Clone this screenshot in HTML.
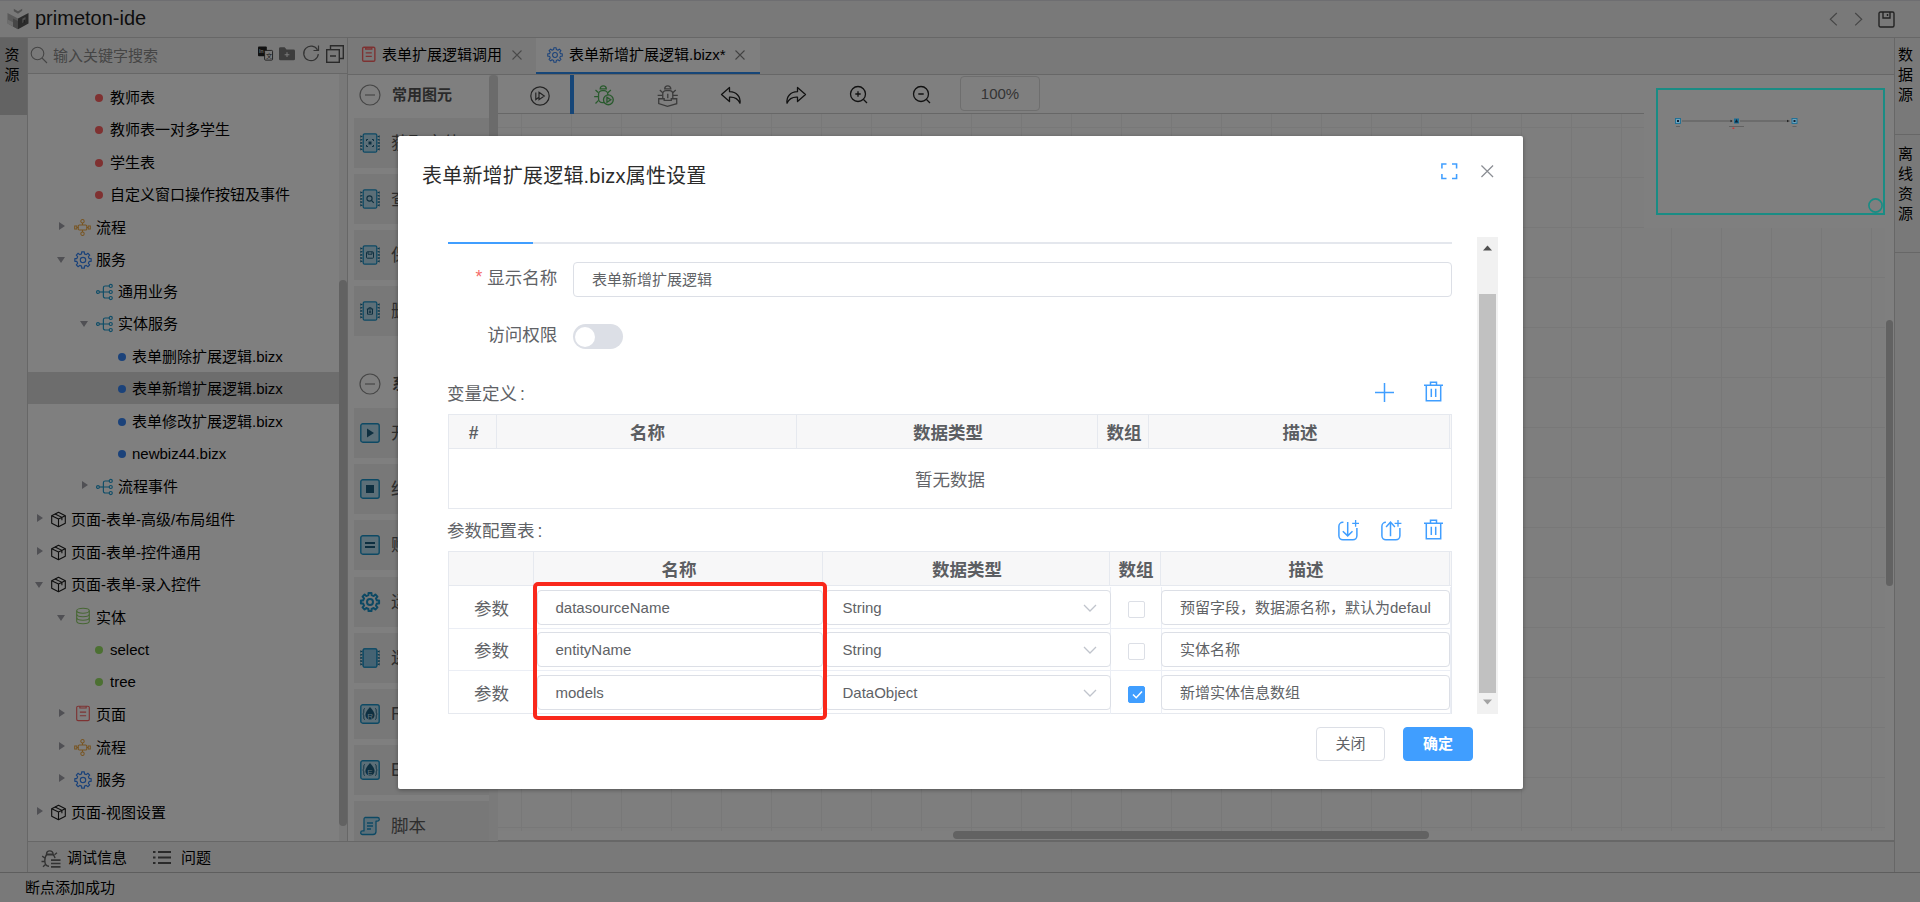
<!DOCTYPE html>
<html lang="zh-CN">
<head>
<meta charset="utf-8">
<title>primeton-ide</title>
<style>
*{box-sizing:border-box;margin:0;padding:0}
html,body{width:1920px;height:902px;overflow:hidden;background:#fff}
body{position:relative;font-family:"Liberation Sans","Noto Sans CJK SC",sans-serif;font-size:15px;color:#000}
.abs{position:absolute}
svg{position:absolute;overflow:visible}
/* ---------- underlying app ---------- */
#app{position:absolute;left:0;top:0;width:1920px;height:902px;background:#fff;z-index:0;overflow:hidden}
#hdr{left:0;top:0;width:1920px;height:38px;background:#f3f3f3;border-bottom:1px solid #cfcfcf;border-top:1px solid #dcdce2}
#hdr .ttl{left:35px;top:4px;font-size:20px;line-height:26px;color:#1a1a1a}
#lstrip{left:0;top:38px;width:28px;height:835px;background:#f3f3f3;border-right:1px solid #cfcfcf}
#lstrip .tab{left:0;top:0;width:27px;height:77px;background:#c6c6c6}
.vtxt{font-size:15px;line-height:20px;width:15px;text-align:center;color:#000}
#rstrip{left:1894px;top:38px;width:26px;height:835px;background:#f3f3f3;border-left:1px solid #cfcfcf}
#rstrip .sep{left:0;width:26px;height:1px;background:#cfcfcf}
#tree{left:28px;top:38px;width:320px;height:803px;background:#fff;border-right:1px solid #cfcfcf}
#tsearch{left:0;top:0;width:319px;height:36px;background:#f3f3f3;border-bottom:1px solid #cfcfcf}
#tsearch .ph{left:25px;top:7px;font-size:15px;line-height:22px;color:#8a8a8a}
.ti{position:absolute;left:0;width:311px;height:32px;line-height:32px;font-size:15px;color:#000;white-space:nowrap}
.ti.sel{background:#dadada}
.ti span{position:absolute;top:1px}
.dot{position:absolute;width:8px;height:8px;border-radius:50%;top:13px}
.arr{position:absolute;width:0;height:0}
.arr.r{border-left:6px solid #a0a0a8;border-top:4.5px solid transparent;border-bottom:4.5px solid transparent;top:11px}
.arr.d{border-top:6px solid #a0a0a8;border-left:4.5px solid transparent;border-right:4.5px solid transparent;top:14px}
#tscroll{left:310.500px;top:36px;width:8.500px;height:767px;background:#f3f3f3}
#tscroll i{position:absolute;left:0.500px;top:206px;width:8px;height:546px;background:#c4c4c4;border-radius:4px}
#tabs{z-index:2;left:348px;top:38px;width:1546px;height:37px;background:#f3f3f3;border-bottom:1px solid #cfcfcf}
#tabs .t{position:absolute;top:0;height:36px;line-height:34px;font-size:15px;color:#000;white-space:nowrap}
#tabs .act{border-bottom:2px solid #2d8cf0;background:#fff}
#pal{left:348px;top:74px;width:150px;height:767px;background:#fff;overflow:hidden}
.pi{position:absolute;left:6px;width:135px;height:50px;background:#f0f0f0;font-size:17.5px;line-height:50px;color:#5c5c5c}
.pi span{position:absolute;left:37px;top:0}
.ph2{position:absolute;left:44px;font-size:15px;font-weight:bold;color:#555;line-height:20px}
#pscroll{left:141px;top:1px;width:8.500px;height:767px;background:#f4f4f4}
#pscroll i{position:absolute;left:0;top:0;width:8.500px;height:500px;background:#d6d6d6;border-radius:4px}
#tbar{left:498px;top:75px;width:1146px;height:39px;background:#fff;border-bottom:1px solid #cfcfcf}
#canvas{left:498px;top:114px;width:1396px;height:727px;background-color:#fdfdfd;
 background-image:linear-gradient(to right,#f1f1f1 1px,transparent 1px),linear-gradient(to bottom,#f1f1f1 1px,transparent 1px);
 background-size:50px 50px;background-position:23px 13px;border-bottom:1px solid #cfcfcf}
#bbar{left:28px;top:841px;width:1866px;height:32px;background:#f3f3f3;border-top:1px solid #cfcfcf;font-size:15px}
#sbar{left:0;top:872px;width:1920px;height:30px;background:#f3f3f3;border-top:1px solid #bdbdbd;font-size:15px}
#mask{left:0;top:0;width:1920px;height:902px;background:rgba(0,0,0,.5)}
/* ---------- dialog ---------- */
#dlg{left:398px;top:136px;width:1125px;height:653px;background:#fff;border-radius:2px;box-shadow:0 1px 4px rgba(0,0,0,.35);color:#606266}
#dlg .title{left:24px;top:27px;font-size:20px;line-height:26px;color:#2b2b2b;white-space:nowrap;letter-spacing:0.200px}
.lab{position:absolute;font-size:17.5px;line-height:24px;color:#606266;white-space:nowrap}
.inp{position:absolute;height:35px;border:1px solid #dcdfe6;border-radius:4px;background:#fff;font-size:15px;line-height:33px;color:#606266;padding-left:18px;white-space:nowrap;overflow:hidden}
.th{position:absolute;top:0;height:34px;line-height:36px;padding-left:2px;text-align:center;font-weight:bold;font-size:17.5px;color:#5c5e62;border-right:1px solid #e6e9ef}
.tbl{position:absolute;border:1px solid #e6e9ef;background:#fff}
.thead{position:absolute;left:0;top:0;height:34px;background:#f7f7f8;border-bottom:1px solid #e6e9ef}
.cb{position:absolute;width:17px;height:17px;border:1px solid #dcdfe6;border-radius:2px;background:#fff}
.cb.on{background:#409eff;border-color:#409eff}
.btn{position:absolute;height:34px;border-radius:4px;font-size:15px;line-height:32px;text-align:center}
</style>
</head>
<body>
<div id="app">
<div id="hdr" class="abs"><svg style="left:6.5px;top:6.5px" width="22" height="22" viewBox="0 0 22 22" ><path d="M6.800 0.800L11 3.300l4.200 -2.500v2L11 5.800 6.800 3.300z" fill="#a4a4a4"/><path d="M0.500 5L11 10.500v10.700L0.500 15.500z" fill="#b4b4b4"/><path d="M0.500 11.500l5.500 2.800v4L0.500 15.500z" fill="#dadada"/><path d="M6 10.500l5 2.500v8.200l-5 -2.700z" fill="#8e8e8e"/><path d="M21.500 5L11 10.500v10.700l10.500 -5.700z" fill="#565656"/><path d="M15.300 10.800l3.200 -1.700v4.300l-3.200 1.700z" fill="#a0a0a0"/><path d="M16.500 12.200l2 -1v3l-2 1z" fill="#444"/></svg><div class="abs ttl">primeton-ide</div><svg style="left:1827px;top:10px" width="14" height="16" viewBox="0 0 14 16" ><path d="M9.800 2L3.300 8.200l6.500 6.200" fill="none" stroke="#8c8c8c" stroke-width="1.200"/></svg><svg style="left:1851px;top:10px" width="14" height="16" viewBox="0 0 14 16" ><path d="M4.200 2l6.500 6.200-6.500 6.200" fill="none" stroke="#8c8c8c" stroke-width="1.200"/></svg><svg style="left:1878px;top:9.5px" width="17" height="17" viewBox="0 0 17 17" ><g fill="none" stroke="#444" stroke-width="1.4"><rect x="1" y="1" width="15" height="15" rx="1.5"/><path d="M5 1v6h7V1M9.5 3v2"/></g></svg></div>
<div id="lstrip" class="abs"><div class="abs tab"></div><div class="abs vtxt" style="left:4.500px;top:7px">资源</div></div>
<div id="rstrip" class="abs"><div class="abs vtxt" style="left:3px;top:7px">数据源</div><div class="abs sep" style="top:96px"></div><div class="abs vtxt" style="left:3px;top:106px">离线资源</div><div class="abs sep" style="top:214px"></div></div>
<div id="tree" class="abs"><div id="tsearch" class="abs"><svg style="left:1.5px;top:7.5px" width="18" height="18" viewBox="0 0 18 18" ><circle cx="7.500" cy="7.500" r="6.300" fill="none" stroke="#8a8a8a" stroke-width="1.100"/><path d="M12 12l5 5" stroke="#8a8a8a" stroke-width="1.100"/></svg><div class="abs ph">输入关键字搜索</div><svg style="left:229.5px;top:7.5px" width="15" height="15" viewBox="0 0 17 16" ><rect x="0" y="0" width="10" height="11" rx="1" fill="#222"/><rect x="7.5" y="4.5" width="9" height="11" rx="1" fill="#f3f3f3" stroke="#333" stroke-width="1"/><text x="1.2" y="8" font-size="6" fill="#fff" font-family="Liberation Sans,sans-serif">In</text><text x="9" y="13.5" font-size="7" fill="#333" font-family="Liberation Sans,Noto Sans CJK SC,sans-serif">文</text></svg><svg style="left:250.5px;top:8.5px" width="16" height="13.5" viewBox="0 0 17 14" ><path d="M0 1.5A1.5 1.5 0 0 1 1.5 0H6l2 2.5h7.5A1.5 1.5 0 0 1 17 4v8.5a1.500 1.500 0 0 1-1.500 1.500h-14A1.500 1.500 0 0 1 0 12.500z" fill="#7a7a7a"/><path d="M8.500 5.500v5M6 8h5" stroke="#f3f3f3" stroke-width="1.1"/></svg><svg style="left:274px;top:7px" width="18" height="18" viewBox="0 0 18 18" ><path d="M15.500 5A7.300 7.300 0 1 0 16.300 9" fill="none" stroke="#666" stroke-width="1.2"/><path d="M16.500 0.500V5.500H11.500" fill="none" stroke="#666" stroke-width="1.2"/></svg><svg style="left:298px;top:7px" width="18" height="18" viewBox="0 0 18 18" ><g fill="none" stroke="#555" stroke-width="1.4"><rect x="0.700" y="4.700" width="12.600" height="12.600"/><path d="M4.500 4.500V0.700H17.300V13.500H13.500M4 11h6"/></g></svg></div><div class="ti" style="top:43px"><i class="dot" style="left:67px;background:#ff6262"></i><span style="left:82px">教师表</span></div><div class="ti" style="top:75px"><i class="dot" style="left:67px;background:#ff6262"></i><span style="left:82px">教师表一对多学生</span></div><div class="ti" style="top:108px"><i class="dot" style="left:67px;background:#ff6262"></i><span style="left:82px">学生表</span></div><div class="ti" style="top:140px"><i class="dot" style="left:67px;background:#ff6262"></i><span style="left:82px">自定义窗口操作按钮及事件</span></div><div class="ti" style="top:173px"><i class="arr r" style="left:31px"></i><svg style="left:45.5px;top:7.5px" width="17" height="17" viewBox="0 0 20 20" ><g fill="none" stroke="#f0a840" stroke-width="1.2"><circle cx="10" cy="2.6" r="2"/><circle cx="10" cy="17.4" r="2"/><rect x="5" y="7" width="10" height="6" rx="1.2"/><path d="M10 4.6v2.4M10 13v2.400M5 10H3.300M15 10h1.700"/><rect x="0.800" y="8.200" width="2.500" height="3.600"/><rect x="16.700" y="8.200" width="2.500" height="3.600"/></g></svg><span style="left:68px">流程</span></div><div class="ti" style="top:205px"><i class="arr d" style="left:29px"></i><svg style="left:46px;top:7.5px" width="18" height="18" viewBox="0 0 20 20" ><path d="M19.08,8.53 L19.08,11.47 L16.82,11.60 L15.95,13.69 L17.46,15.39 L15.39,17.46 L13.69,15.95 L11.60,16.82 L11.47,19.08 L8.53,19.08 L8.40,16.82 L6.31,15.95 L4.61,17.46 L2.54,15.39 L4.05,13.69 L3.18,11.60 L0.92,11.47 L0.92,8.53 L3.18,8.40 L4.05,6.31 L2.54,4.61 L4.61,2.54 L6.31,4.05 L8.40,3.18 L8.53,0.92 L11.47,0.92 L11.60,3.18 L13.69,4.05 L15.39,2.54 L17.46,4.61 L15.95,6.31 L16.82,8.40Z" fill="none" stroke="#3685f5" stroke-width="1.3" stroke-linejoin="round"/><circle cx="10" cy="10" r="3" fill="none" stroke="#3685f5" stroke-width="1.3"/></svg><span style="left:68px">服务</span></div><div class="ti" style="top:237px"><svg style="left:68px;top:7.5px" width="18" height="18" viewBox="0 0 20 20" ><g fill="none" stroke="#1f9bd0" stroke-width="1.3"><circle cx="2.2" cy="10" r="1.6"/><path d="M3.8 10H8"/><path d="M14.5 3.3H10.2a2 2 0 0 0-2 2v9.4a2 2 0 0 0 2 2h4.3M8.2 10h6.3"/><circle cx="16.4" cy="3.3" r="1.7"/><circle cx="16.4" cy="10" r="1.7"/><circle cx="16.4" cy="16.7" r="1.7"/></g></svg><span style="left:90px">通用业务</span></div><div class="ti" style="top:269px"><i class="arr d" style="left:52px"></i><svg style="left:68px;top:7.5px" width="18" height="18" viewBox="0 0 20 20" ><g fill="none" stroke="#1f9bd0" stroke-width="1.3"><circle cx="2.2" cy="10" r="1.6"/><path d="M3.8 10H8"/><path d="M14.5 3.3H10.2a2 2 0 0 0-2 2v9.4a2 2 0 0 0 2 2h4.3M8.2 10h6.3"/><circle cx="16.4" cy="3.3" r="1.7"/><circle cx="16.4" cy="10" r="1.7"/><circle cx="16.4" cy="16.7" r="1.7"/></g></svg><span style="left:90px">实体服务</span></div><div class="ti" style="top:302px"><i class="dot" style="left:89.5px;background:#3685f5"></i><span style="left:104px">表单删除扩展逻辑.bizx</span></div><div class="ti sel" style="top:334px"><i class="dot" style="left:89.5px;background:#3685f5"></i><span style="left:104px">表单新增扩展逻辑.bizx</span></div><div class="ti" style="top:367px"><i class="dot" style="left:89.5px;background:#3685f5"></i><span style="left:104px">表单修改扩展逻辑.bizx</span></div><div class="ti" style="top:399px"><i class="dot" style="left:89.5px;background:#3685f5"></i><span style="left:104px">newbiz44.bizx</span></div><div class="ti" style="top:432px"><i class="arr r" style="left:54px"></i><svg style="left:68px;top:7.5px" width="18" height="18" viewBox="0 0 20 20" ><g fill="none" stroke="#1f9bd0" stroke-width="1.3"><circle cx="2.2" cy="10" r="1.6"/><path d="M3.8 10H8"/><path d="M14.5 3.3H10.2a2 2 0 0 0-2 2v9.4a2 2 0 0 0 2 2h4.3M8.2 10h6.3"/><circle cx="16.4" cy="3.3" r="1.7"/><circle cx="16.4" cy="10" r="1.7"/><circle cx="16.4" cy="16.7" r="1.7"/></g></svg><span style="left:90px">流程事件</span></div><div class="ti" style="top:465px"><i class="arr r" style="left:9px"></i><svg style="left:22.0px;top:8.0px" width="17" height="17" viewBox="0 0 20 20" ><g fill="none" stroke="#1a1a1a" stroke-width="1.3" stroke-linejoin="round"><path d="M10 1.5L18 5.5V14.5L10 18.5L2 14.5V5.5Z"/><path d="M2 5.5L10 9.5L18 5.5M10 9.5V18.5M6 3.5L14 7.5V11"/></g></svg><span style="left:43px">页面-表单-高级/布局组件</span></div><div class="ti" style="top:498px"><i class="arr r" style="left:9px"></i><svg style="left:22.0px;top:8.0px" width="17" height="17" viewBox="0 0 20 20" ><g fill="none" stroke="#1a1a1a" stroke-width="1.3" stroke-linejoin="round"><path d="M10 1.5L18 5.5V14.5L10 18.5L2 14.5V5.5Z"/><path d="M2 5.5L10 9.5L18 5.5M10 9.5V18.5M6 3.5L14 7.5V11"/></g></svg><span style="left:43px">页面-表单-控件通用</span></div><div class="ti" style="top:530px"><i class="arr d" style="left:7px"></i><svg style="left:22.0px;top:8.0px" width="17" height="17" viewBox="0 0 20 20" ><g fill="none" stroke="#1a1a1a" stroke-width="1.3" stroke-linejoin="round"><path d="M10 1.5L18 5.5V14.5L10 18.5L2 14.5V5.5Z"/><path d="M2 5.5L10 9.5L18 5.5M10 9.5V18.5M6 3.5L14 7.5V11"/></g></svg><span style="left:43px">页面-表单-录入控件</span></div><div class="ti" style="top:563px"><i class="arr d" style="left:29px"></i><svg style="left:45.5px;top:6.0px" width="18" height="18" viewBox="0 0 20 20" ><g fill="none" stroke="#8fce68" stroke-width="1.2"><ellipse cx="10" cy="4.2" rx="7" ry="2.8"/><path d="M3 4.2v11.6c0 1.5 3.1 2.8 7 2.8s7-1.3 7-2.8V4.2"/><path d="M3 8.1c0 1.5 3.1 2.8 7 2.8s7-1.3 7-2.8M3 12c0 1.5 3.1 2.8 7 2.8s7-1.3 7-2.8"/></g></svg><span style="left:68px">实体</span></div><div class="ti" style="top:595px"><i class="dot" style="left:67px;background:#98e064"></i><span style="left:82px">select</span></div><div class="ti" style="top:627px"><i class="dot" style="left:67px;background:#98e064"></i><span style="left:82px">tree</span></div><div class="ti" style="top:660px"><i class="arr r" style="left:31px"></i><svg style="left:45.5px;top:5.5px" width="18" height="18" viewBox="0 0 20 20" ><g fill="none" stroke="#fa6464" stroke-width="1.25"><rect x="3" y="2.5" width="14" height="16" rx="1.5"/><path d="M6.5 2.5v2h7v-2M6.5 9h7M6.5 13h7"/></g></svg><span style="left:68px">页面</span></div><div class="ti" style="top:693px"><i class="arr r" style="left:31px"></i><svg style="left:45.5px;top:7.5px" width="17" height="17" viewBox="0 0 20 20" ><g fill="none" stroke="#f0a840" stroke-width="1.2"><circle cx="10" cy="2.6" r="2"/><circle cx="10" cy="17.4" r="2"/><rect x="5" y="7" width="10" height="6" rx="1.2"/><path d="M10 4.6v2.4M10 13v2.400M5 10H3.300M15 10h1.700"/><rect x="0.800" y="8.200" width="2.500" height="3.600"/><rect x="16.700" y="8.200" width="2.500" height="3.600"/></g></svg><span style="left:68px">流程</span></div><div class="ti" style="top:725px"><i class="arr r" style="left:31px"></i><svg style="left:46px;top:7.5px" width="18" height="18" viewBox="0 0 20 20" ><path d="M19.08,8.53 L19.08,11.47 L16.82,11.60 L15.95,13.69 L17.46,15.39 L15.39,17.46 L13.69,15.95 L11.60,16.82 L11.47,19.08 L8.53,19.08 L8.40,16.82 L6.31,15.95 L4.61,17.46 L2.54,15.39 L4.05,13.69 L3.18,11.60 L0.92,11.47 L0.92,8.53 L3.18,8.40 L4.05,6.31 L2.54,4.61 L4.61,2.54 L6.31,4.05 L8.40,3.18 L8.53,0.92 L11.47,0.92 L11.60,3.18 L13.69,4.05 L15.39,2.54 L17.46,4.61 L15.95,6.31 L16.82,8.40Z" fill="none" stroke="#3685f5" stroke-width="1.3" stroke-linejoin="round"/><circle cx="10" cy="10" r="3" fill="none" stroke="#3685f5" stroke-width="1.3"/></svg><span style="left:68px">服务</span></div><div class="ti" style="top:758px"><i class="arr r" style="left:9px"></i><svg style="left:22.0px;top:8.0px" width="17" height="17" viewBox="0 0 20 20" ><g fill="none" stroke="#1a1a1a" stroke-width="1.3" stroke-linejoin="round"><path d="M10 1.5L18 5.5V14.5L10 18.5L2 14.5V5.5Z"/><path d="M2 5.5L10 9.5L18 5.5M10 9.5V18.5M6 3.5L14 7.5V11"/></g></svg><span style="left:43px">页面-视图设置</span></div><div id="tscroll" class="abs"><i></i></div></div>
<div id="tabs" class="abs"><svg style="left:12px;top:7.2px" width="17.5" height="17.5" viewBox="0 0 20 20" ><g fill="none" stroke="#fa6464" stroke-width="1.6"><rect x="3" y="2.5" width="14" height="16" rx="1.5"/><path d="M6.5 2.5v2h7v-2M6.5 9h7M6.5 13h7"/></g></svg><div class="t" style="left:34px">表单扩展逻辑调用</div><svg style="left:163.5px;top:12px" width="10" height="10" viewBox="0 0 10 10" ><path d="M0.500 0.500l9 9M9.500 0.500l-9 9" stroke="#959595" stroke-width="1.100"/></svg><div class="t act" style="left:188px;width:224px"></div><svg style="left:199px;top:9px" width="16" height="16" viewBox="0 0 20 20" ><path d="M19.08,8.53 L19.08,11.47 L16.82,11.60 L15.95,13.69 L17.46,15.39 L15.39,17.46 L13.69,15.95 L11.60,16.82 L11.47,19.08 L8.53,19.08 L8.40,16.82 L6.31,15.95 L4.61,17.46 L2.54,15.39 L4.05,13.69 L3.18,11.60 L0.92,11.47 L0.92,8.53 L3.18,8.40 L4.05,6.31 L2.54,4.61 L4.61,2.54 L6.31,4.05 L8.40,3.18 L8.53,0.92 L11.47,0.92 L11.60,3.18 L13.69,4.05 L15.39,2.54 L17.46,4.61 L15.95,6.31 L16.82,8.40Z" fill="none" stroke="#3685f5" stroke-width="1.3" stroke-linejoin="round"/><circle cx="10" cy="10" r="3" fill="none" stroke="#3685f5" stroke-width="1.3"/></svg><div class="t" style="left:221px">表单新增扩展逻辑.bizx*</div><svg style="left:387px;top:12px" width="10" height="10" viewBox="0 0 10 10" ><path d="M0.500 0.500l9 9M9.500 0.500l-9 9" stroke="#858585" stroke-width="1.100"/></svg></div>
<div id="pal" class="abs"><svg style="left:11px;top:9.5px" width="22" height="22" viewBox="0 0 22 22" ><circle cx="11" cy="11" r="10" fill="none" stroke="#8e8e8e" stroke-width="1.200"/><path d="M6 11h10" stroke="#8e8e8e" stroke-width="1.200"/></svg><div class="ph2" style="top:10.5px">常用图元</div><svg style="left:11px;top:298.5px" width="22" height="22" viewBox="0 0 22 22" ><circle cx="11" cy="11" r="10" fill="none" stroke="#8e8e8e" stroke-width="1.200"/><path d="M6 11h10" stroke="#8e8e8e" stroke-width="1.200"/></svg><div class="ph2" style="top:299.5px">系统图元</div><div class="pi" style="top:44px"><svg style="left:6px;top:14.7px" width="20" height="20" viewBox="0 0 20 20" ><path d="M3 3.5L0.300 2.2V4.8zM17 3.5l2.700 -1.300v2.600z" fill="#156f99"/><path d="M3 6.7L0.300 5.4V8.0zM17 6.7l2.700 -1.300v2.600z" fill="#156f99"/><path d="M3 9.9L0.300 8.6V11.200000000000001zM17 9.9l2.700 -1.300v2.600z" fill="#156f99"/><path d="M3 13.1L0.300 11.799999999999999V14.4zM17 13.1l2.700 -1.300v2.600z" fill="#156f99"/><path d="M3 16.3L0.300 15.0V17.6zM17 16.3l2.700 -1.300v2.600z" fill="#156f99"/><rect x="3.200" y="0.800" width="13.600" height="18.400" rx="1.500" fill="#b9dff0" stroke="#1b93c9" stroke-width="1.300"/><g fill="none" stroke="#1d5f80" stroke-width="1"><path d="M6.500 8V6.500H8M12 6.500h1.500V8M13.500 12v1.500H12M8 13.500H6.500V12"/></g><rect x="8.500" y="8.500" width="3" height="3" fill="#1d5f80"/></svg><span>获取实体</span></div><div class="pi" style="top:100px"><svg style="left:6px;top:14.7px" width="20" height="20" viewBox="0 0 20 20" ><path d="M3 3.5L0.300 2.2V4.8zM17 3.5l2.700 -1.300v2.600z" fill="#156f99"/><path d="M3 6.7L0.300 5.4V8.0zM17 6.7l2.700 -1.300v2.600z" fill="#156f99"/><path d="M3 9.9L0.300 8.6V11.200000000000001zM17 9.9l2.700 -1.300v2.600z" fill="#156f99"/><path d="M3 13.1L0.300 11.799999999999999V14.4zM17 13.1l2.700 -1.300v2.600z" fill="#156f99"/><path d="M3 16.3L0.300 15.0V17.6zM17 16.3l2.700 -1.300v2.600z" fill="#156f99"/><rect x="3.200" y="0.800" width="13.600" height="18.400" rx="1.500" fill="#b9dff0" stroke="#1b93c9" stroke-width="1.300"/><circle cx="9.500" cy="9.500" r="2.600" fill="none" stroke="#1d5f80" stroke-width="1.100"/><path d="M11.500 11.500l2.300 2.300" stroke="#1d5f80" stroke-width="1.100"/></svg><span>查询实体</span></div><div class="pi" style="top:156px"><svg style="left:6px;top:14.7px" width="20" height="20" viewBox="0 0 20 20" ><path d="M3 3.5L0.300 2.2V4.8zM17 3.5l2.700 -1.300v2.600z" fill="#156f99"/><path d="M3 6.7L0.300 5.4V8.0zM17 6.7l2.700 -1.300v2.600z" fill="#156f99"/><path d="M3 9.9L0.300 8.6V11.200000000000001zM17 9.9l2.700 -1.300v2.600z" fill="#156f99"/><path d="M3 13.1L0.300 11.799999999999999V14.4zM17 13.1l2.700 -1.300v2.600z" fill="#156f99"/><path d="M3 16.3L0.300 15.0V17.6zM17 16.3l2.700 -1.300v2.600z" fill="#156f99"/><rect x="3.200" y="0.800" width="13.600" height="18.400" rx="1.500" fill="#b9dff0" stroke="#1b93c9" stroke-width="1.300"/><g fill="none" stroke="#1d5f80" stroke-width="1"><rect x="6.500" y="6.800" width="7" height="6.400" rx="0.800"/><path d="M8 6.800v2.400h4V6.800"/></g></svg><span>保存实体</span></div><div class="pi" style="top:212px"><svg style="left:6px;top:14.7px" width="20" height="20" viewBox="0 0 20 20" ><path d="M3 3.5L0.300 2.2V4.8zM17 3.5l2.700 -1.300v2.600z" fill="#156f99"/><path d="M3 6.7L0.300 5.4V8.0zM17 6.7l2.700 -1.300v2.600z" fill="#156f99"/><path d="M3 9.9L0.300 8.6V11.200000000000001zM17 9.9l2.700 -1.300v2.600z" fill="#156f99"/><path d="M3 13.1L0.300 11.799999999999999V14.4zM17 13.1l2.700 -1.300v2.600z" fill="#156f99"/><path d="M3 16.3L0.300 15.0V17.6zM17 16.3l2.700 -1.300v2.600z" fill="#156f99"/><rect x="3.200" y="0.800" width="13.600" height="18.400" rx="1.500" fill="#b9dff0" stroke="#1b93c9" stroke-width="1.300"/><g fill="none" stroke="#1d5f80" stroke-width="1"><path d="M6.800 8h6.400M8.800 8V6.800h2.400V8M7.500 8v5.200h5V8M9.300 9.500v2.500M10.700 9.500v2.500"/></g></svg><span>删除实体</span></div><div class="pi" style="top:334px"><svg style="left:6px;top:14.7px" width="20" height="20" viewBox="0 0 20 20" ><rect x="0.800" y="0.800" width="18.400" height="18.400" rx="2" fill="#b9dff0" stroke="#1b93c9" stroke-width="1.400"/><path d="M7 5.500l7 4.500-7 4.500z" fill="#1d5f80"/></svg><span>开始</span></div><div class="pi" style="top:390px"><svg style="left:6px;top:14.7px" width="20" height="20" viewBox="0 0 20 20" ><rect x="0.800" y="0.800" width="18.400" height="18.400" rx="2" fill="#b9dff0" stroke="#1b93c9" stroke-width="1.400"/><rect x="6" y="6" width="8" height="8" fill="#1d5f80"/></svg><span>结束</span></div><div class="pi" style="top:446px"><svg style="left:6px;top:14.7px" width="20" height="20" viewBox="0 0 20 20" ><rect x="0.800" y="0.800" width="18.400" height="18.400" rx="2" fill="#b9dff0" stroke="#1b93c9" stroke-width="1.400"/><path d="M5 8h10M5 12h10" stroke="#1d5f80" stroke-width="1.800"/></svg><span>赋值</span></div><div class="pi" style="top:503px"><svg style="left:6px;top:14.7px" width="20" height="20" viewBox="0 0 20 20" ><path d="M19.08,8.53 L19.08,11.47 L16.82,11.60 L15.95,13.69 L17.46,15.39 L15.39,17.46 L13.69,15.95 L11.60,16.82 L11.47,19.08 L8.53,19.08 L8.40,16.82 L6.31,15.95 L4.61,17.46 L2.54,15.39 L4.05,13.69 L3.18,11.60 L0.92,11.47 L0.92,8.53 L3.18,8.40 L4.05,6.31 L2.54,4.61 L4.61,2.54 L6.31,4.05 L8.40,3.18 L8.53,0.92 L11.47,0.92 L11.60,3.18 L13.69,4.05 L15.39,2.54 L17.46,4.61 L15.95,6.31 L16.82,8.40Z" fill="none" stroke="#1b93c9" stroke-width="2" stroke-linejoin="round"/><circle cx="10" cy="10" r="3" fill="none" stroke="#1b93c9" stroke-width="2"/></svg><span>运算逻辑</span></div><div class="pi" style="top:559px"><svg style="left:6px;top:14.7px" width="20" height="20" viewBox="0 0 20 20" ><path d="M3 3.5L0.300 2.2V4.8zM17 3.5l2.700 -1.300v2.600z" fill="#156f99"/><path d="M3 6.7L0.300 5.4V8.0zM17 6.7l2.700 -1.300v2.600z" fill="#156f99"/><path d="M3 9.9L0.300 8.6V11.200000000000001zM17 9.9l2.700 -1.300v2.600z" fill="#156f99"/><path d="M3 13.1L0.300 11.799999999999999V14.4zM17 13.1l2.700 -1.300v2.600z" fill="#156f99"/><path d="M3 16.3L0.300 15.0V17.6zM17 16.3l2.700 -1.300v2.600z" fill="#156f99"/><rect x="3.200" y="0.800" width="13.600" height="18.400" rx="1.500" fill="#b9dff0" stroke="#1b93c9" stroke-width="1.300"/><rect x="3.200" y="0.800" width="13.600" height="18.400" rx="1.500" fill="#8ac6e6" stroke="#1b93c9" stroke-width="1.300"/></svg><span>逻辑流</span></div><div class="pi" style="top:615px"><svg style="left:6px;top:14.7px" width="20" height="20" viewBox="0 0 20 20" ><rect x="0.800" y="0.800" width="18.400" height="18.400" rx="2" fill="#b9dff0" stroke="#1b93c9" stroke-width="1.400"/><path d="M10 3c2.800 3.200 4.600 5.600 4.600 8a4.600 4.600 0 0 1-9.200 0c0-2.400 1.800-4.800 4.600-8z" fill="#1d5f80"/><text x="7.300" y="14.800" font-size="8" font-family="Liberation Sans,sans-serif" fill="#b9dff0">R</text><path d="M5 4.500c-1.200 0-1.200 1-1.200 2.500s0 2.500-1 3c1 0.500 1 1.500 1 3s0 2.500 1.200 2.500M15 4.500c1.200 0 1.200 1 1.200 2.500s0 2.500 1 3c-1 0.500-1 1.500-1 3s0 2.500-1.200 2.500" fill="none" stroke="#1d5f80" stroke-width="0.900"/></svg><span>Restful</span></div><div class="pi" style="top:671px"><svg style="left:6px;top:14.7px" width="20" height="20" viewBox="0 0 20 20" ><rect x="0.800" y="0.800" width="18.400" height="18.400" rx="2" fill="#b9dff0" stroke="#1b93c9" stroke-width="1.400"/><path d="M10 3c2.800 3.200 4.600 5.600 4.600 8a4.600 4.600 0 0 1-9.200 0c0-2.400 1.800-4.800 4.600-8z" fill="#1d5f80"/><text x="7.300" y="14.800" font-size="8" font-family="Liberation Sans,sans-serif" fill="#b9dff0">E</text><path d="M5 4.500c-1.200 0-1.200 1-1.200 2.500s0 2.500-1 3c1 0.500 1 1.500 1 3s0 2.500 1.200 2.500M15 4.500c1.200 0 1.200 1 1.200 2.500s0 2.500 1 3c-1 0.500-1 1.500-1 3s0 2.500-1.200 2.500" fill="none" stroke="#1d5f80" stroke-width="0.900"/></svg><span>ESB</span></div><div class="pi" style="top:727px"><svg style="left:6px;top:14.7px" width="20" height="20" viewBox="0 0 20 20" ><path d="M5 1.500h12.500a1.800 1.800 0 0 1 0 3.600H16v10.400a3 3 0 0 1-3 3H2.500a1.800 1.800 0 0 1 0-3.600H4V3.500a2 2 0 0 1 1-2z" fill="#b9dff0" stroke="#1b93c9" stroke-width="1.300" stroke-linejoin="round"/><path d="M7 7h6M7 10h6M7 13h4" stroke="#1b93c9" stroke-width="1.300"/></svg><span>脚本</span></div><div id="pscroll" class="abs"><i></i></div></div>
<div id="tbar" class="abs"><svg style="left:32px;top:10.5px" width="20" height="20" viewBox="0 0 20 20" ><g fill="none" stroke="#4a4a4a" stroke-width="1.200"><circle cx="10" cy="10" r="9.200"/><path d="M5.800 6.500v7l2.800 -2M9 6.300l5.300 3.700-5.300 3.700z"/></g></svg><div class="abs" style="left:72px;top:0;width:4px;height:40px;background:#2d8cf0"></div><svg style="left:94px;top:8.5px" width="24" height="24" viewBox="0 0 22 22" ><g fill="none" stroke="#52b45a" stroke-width="1.200"><path d="M7.500 4.500a2.800 2.800 0 0 1 5.600 0z"/><rect x="6" y="6" width="8.500" height="11" rx="3.500"/><path d="M6 8L3.200 5.500M14.500 8l2.800 -2.500M6 11.500H2M6 15l-2.800 2.800"/><circle cx="15" cy="14.500" r="4.500" fill="#f3f3f3"/><path d="M13.700 12.300l3.500 2.200-3.500 2.200z"/></g></svg><svg style="left:158px;top:8.5px" width="24" height="24" viewBox="0 0 22 22" ><g fill="none" stroke="#777" stroke-width="1.200"><path d="M8 4.500a2.800 2.800 0 0 1 5.600 0z"/><path d="M6.200 13V9a3 3 0 0 1 3-3h3.200a3 3 0 0 1 3 3v4"/><path d="M6.200 8L3.500 5.500M15.400 8l2.700 -2.500M6 10.500H1.500M15.500 10.500H20M10.800 9v4"/><path d="M2.500 13.500h5v1.500h6.500v-1.500h5v4.500l-8.500 2.500-8-2.500z"/></g></svg><svg style="left:222px;top:10.8px" width="24" height="20" viewBox="0 0 24 20" ><path d="M9.500 1.500L1.500 8.500l8 7v-4.300c5-0.300 8.500 1.500 10.500 6 0.700-7-3.500-11.200-10.500-11.500z" fill="none" stroke="#222" stroke-width="1.300" stroke-linejoin="round"/></svg><svg style="left:285px;top:10.8px" width="24" height="20" viewBox="0 0 24 20" ><path d="M14.500 1.500l8 7-8 7v-4.300c-5-0.300-8.500 1.500-10.500 6-0.700-7 3.500-11.200 10.500-11.500z" fill="none" stroke="#222" stroke-width="1.300" stroke-linejoin="round"/></svg><svg style="left:351px;top:10px" width="20" height="20" viewBox="0 0 20 20" ><g fill="none" stroke="#222" stroke-width="1.300"><circle cx="9" cy="9" r="7.500"/><path d="M14.500 14.500l3.500 3.500M6.300 9h5.400M9 6.300v5.400"/></g></svg><svg style="left:414px;top:10px" width="20" height="20" viewBox="0 0 20 20" ><g fill="none" stroke="#222" stroke-width="1.300"><circle cx="9" cy="9" r="7.500"/><path d="M14.500 14.500l3.500 3.500M6.300 9h5.400"/></g></svg><div class="abs" style="left:462px;top:1px;width:80px;height:35px;border:1px solid #dcdcdc;border-radius:4px;text-align:center;line-height:33px;font-size:15px;color:#6a6a6a">100%</div></div>
<div id="canvas" class="abs"><div class="abs" style="left:0;top:716.500px;width:1396px;height:9.500px;background:#fff"></div><div class="abs" style="left:455px;top:717px;width:476px;height:8px;border-radius:4px;background:#c4c4c4"></div><div class="abs" style="left:1387px;top:0;width:9px;height:726px;background:#fff"></div><div class="abs" style="left:1388px;top:206px;width:7px;height:266px;border-radius:4px;background:#c4c4c4"></div><div class="abs" style="left:1146px;top:-39px;width:250px;height:152.500px;background:#fff"></div></div><div id="bbar" class="abs"><svg style="left:13px;top:6.5px" width="20" height="20" viewBox="0 0 20 20" ><g fill="none" stroke="#666" stroke-width="1.400"><path d="M5.500 5.200a3.300 3.300 0 0 1 6.600 0z"/><path d="M8 17.200c-3 0-4.200-2.500-4.200-5.700 0-3 1-5 2-5.800h6c1.200 0.800 2 2 2.200 3.500M3.800 9L1.200 7.200M3.600 12.500H0.500M4.500 15.500l-2.500 2.300M13.500 5.800l2.500 -2"/><path d="M10 11.200h9.500M10 14.500h9.500M10 17.800h9.500" stroke-width="1.700"/></g></svg><div class="abs" style="left:39px;top:5px;line-height:22px">调试信息</div><svg style="left:125px;top:8px" width="18" height="16" viewBox="0 0 18 16" ><g stroke="#555" stroke-width="2"><path d="M0 2h2.500M5 2h13M0 7.500h2.500M5 7.500h13M0 13h2.500M5 13h13"/></g></svg><div class="abs" style="left:153px;top:5px;line-height:22px">问题</div></div><div id="sbar" class="abs"><div class="abs" style="left:25px;top:4px;line-height:22px">断点添加成功</div></div>
</div>
<div id="mask" class="abs"></div>
<div class="abs" style="left:1656px;top:88px;width:229px;height:127px;border:2px solid #1a8c84"><svg style="left:209.8px;top:108px" width="15" height="15" viewBox="0 0 15 15" ><circle cx="7.500" cy="7.500" r="6.600" fill="none" stroke="#1a8c84" stroke-width="1.600"/></svg><svg style="left:17px;top:26.5px" width="124" height="12" viewBox="0 0 124 12" ><path d="M7 4h50M65 4h50" stroke="#4a4a4a" stroke-width="0.700"/><path d="M55.500 2.800l2.200 1.200-2.200 1.200zM112 2.800l2.200 1.200-2.200 1.200z" fill="#222"/><rect x="0.5" y="1.500" width="5" height="5" fill="#6fa3bd" stroke="#1b6f96" stroke-width="0.900"/><rect x="2.0" y="3" width="2" height="2" fill="#123"/><rect x="59" y="1.500" width="5" height="5" fill="#1b6f96"/><path d="M61.500 2l1.800 3.500h-3.600z" fill="#123"/><rect x="117" y="1.500" width="5" height="5" fill="#6fa3bd" stroke="#1b6f96" stroke-width="0.900"/><rect x="118.5" y="3" width="2" height="2" fill="#123"/><path d="M1 9.500h4M54 9.500h15M117.500 9.500h4" stroke="#5a5a5a" stroke-width="0.800"/><rect x="57.500" y="10.500" width="1.800" height="1.500" fill="#c33"/></svg></div>
<div id="dlg" class="abs">
<div class="abs title">表单新增扩展逻辑.bizx属性设置</div>
<svg style="left:1042.8px;top:27.2px" width="16.5" height="16.5" viewBox="0 0 18 18" ><path d="M1 6V1h5M12 1h5v5M17 12v5h-5M6 17H1v-5" fill="none" stroke="#409eff" stroke-width="1.700"/></svg>
<svg style="left:1083.3px;top:29.3px" width="12.5" height="12.5" viewBox="0 0 14 14" ><path d="M0.500 0.500l13 13M13.500 0.500l-13 13" stroke="#8a8d93" stroke-width="1.400"/></svg>
<div class="abs" style="left:50px;top:105.7px;width:1004px;height:2px;background:#e4e7ed"></div>
<div class="abs" style="left:50px;top:105.7px;width:85px;height:2px;background:#409eff"></div>
<div class="abs" style="left:1079px;top:101px;width:21px;height:477px;background:#f1f1f1"><div class="abs" style="left:2px;top:57px;width:17px;height:399px;background:#c1c1c1"></div><svg style="left:6px;top:8px" width="9" height="6" viewBox="0 0 9 6" ><path d="M0 5.500L4.500 0.500 9 5.500z" fill="#505050"/></svg><svg style="left:6px;top:462px" width="9" height="6" viewBox="0 0 9 6" ><path d="M0 0.500L4.500 5.500 9 0.500z" fill="#a3a3a3"/></svg></div>
<div class="lab" style="left:77.5px;top:129.3px;color:#f56c6c">*</div>
<div class="lab" style="left:89.3px;top:129.5px">显示名称</div>
<div class="inp" style="left:175px;top:126px;width:879px;border-color:#dcdfe6">表单新增扩展逻辑</div>
<div class="lab" style="left:89.3px;top:186.5px">访问权限</div>
<div class="abs" style="left:175px;top:188px;width:50px;height:25px;border-radius:13px;background:#dcdfe6"><div class="abs" style="left:1.800px;top:2.500px;width:20px;height:20px;border-radius:50%;background:#fff"></div></div>
<div class="lab" style="left:49px;top:245.5px">变量定义<span style="margin-left:3px">:</span></div>
<svg style="left:977px;top:246.5px" width="19" height="19" viewBox="0 0 19 19" ><path d="M9.500 0v19M0 9.500h19" stroke="#409eff" stroke-width="1.500"/></svg>
<svg style="left:1025.5px;top:244.5px" width="19" height="21" viewBox="0 0 19 21" ><g fill="none" stroke="#409eff" stroke-width="1.500"><path d="M0 4.200h19M6.500 4V1.200h6V4M2.300 4.500V19.800h14.400V4.500M7.300 7.700v8.300M11.700 7.700v8.300"/></g></svg>
<div class="tbl" style="left:50px;top:278px;width:1004px;height:95px"><div class="thead" style="width:1002px"><div class="th" style="left:0px;width:48px">#</div><div class="th" style="left:48px;width:300px">名称</div><div class="th" style="left:348px;width:301px">数据类型</div><div class="th" style="left:649px;width:51px">数组</div><div class="th" style="left:700px;width:301px">描述</div></div><div class="abs" style="left:0;top:36px;width:1002px;height:58px;line-height:58px;text-align:center;font-size:17.500px;color:#636468">暂无数据</div></div>
<div class="lab" style="left:49px;top:383px">参数配置表<span style="margin-left:3px">:</span></div>
<svg style="left:940px;top:383px" width="22" height="22" viewBox="0 0 22 22" ><g fill="none" stroke="#409eff" stroke-width="1.500"><path d="M5.400 3.300H4.900a4 4 0 0 0-4 4v9.500a4 4 0 0 0 4 4h10a4 4 0 0 0 4-4V9.100M9.700 2.900v14M4.800 12.300l4.900 4.600 4.800-4.600"/><path d="M17.600 1v6.800M14.200 4.400h6.800" stroke-width="1.300"/></g></svg>
<svg style="left:982.8px;top:383px" width="22" height="22" viewBox="0 0 22 22" ><g fill="none" stroke="#409eff" stroke-width="1.500"><path d="M4.900 3.300a4 4 0 0 0-4 4v9.500a4 4 0 0 0 4 4h10a4 4 0 0 0 4-4V9.100M9.500 17.200V3M5.100 7.900l4.400-4.900 4.400 4.900"/><path d="M17 1v6.800M13.600 4.400h6.800" stroke-width="1.300"/></g></svg>
<svg style="left:1025.5px;top:382.8px" width="19" height="21" viewBox="0 0 19 21" ><g fill="none" stroke="#409eff" stroke-width="1.500"><path d="M0 4.200h19M6.500 4V1.200h6V4M2.300 4.500V19.800h14.400V4.500M7.300 7.700v8.300M11.700 7.700v8.300"/></g></svg>
<div class="tbl" style="left:50px;top:415px;width:1004px;height:163px"><div class="thead" style="width:1002px"><div class="th" style="left:0px;width:85px"></div><div class="th" style="left:85px;width:289px">名称</div><div class="th" style="left:374px;width:287px">数据类型</div><div class="th" style="left:661px;width:51px">数组</div><div class="th" style="left:712px;width:289px">描述</div></div><div class="abs" style="left:84.5px;top:35px;width:1px;height:127px;background:#ebeef5"></div><div class="abs" style="left:373.5px;top:35px;width:1px;height:127px;background:#ebeef5"></div><div class="abs" style="left:660.5px;top:35px;width:1px;height:127px;background:#ebeef5"></div><div class="abs" style="left:711.5px;top:35px;width:1px;height:127px;background:#ebeef5"></div><div class="abs" style="left:1000.5px;top:35px;width:1px;height:127px;background:#ebeef5"></div><div class="abs" style="left:0;top:76px;width:1002px;height:1px;background:#ebeef5"></div><div class="abs" style="left:0;top:117.5px;width:1002px;height:1px;background:#ebeef5"></div><div class="abs" style="left:-1px;top:44.40000000000005px;width:87px;line-height:26px;text-align:center;font-size:17.500px;color:#606266">参数</div><div class="inp" style="left:87.5px;top:38px;width:286px">datasourceName</div><div class="inp" style="left:375.5px;top:38px;width:286px;padding-left:17px">String<svg style="left:257px;top:12.5px" width="14" height="8" viewBox="0 0 14 8" ><path d="M1 1l6 6 6-6" fill="none" stroke="#c0c4cc" stroke-width="1.300"/></svg></div><div class="cb" style="left:679px;top:49.00000000000004px"></div><div class="inp" style="left:712px;top:38px;width:288.500px"><div style="width:251px;overflow:hidden">预留字段，数据源名称，默认为default</div></div><div class="abs" style="left:-1px;top:86.30000000000003px;width:87px;line-height:26px;text-align:center;font-size:17.500px;color:#606266">参数</div><div class="inp" style="left:87.5px;top:80px;width:286px">entityName</div><div class="inp" style="left:375.5px;top:80px;width:286px;padding-left:17px">String<svg style="left:257px;top:12.5px" width="14" height="8" viewBox="0 0 14 8" ><path d="M1 1l6 6 6-6" fill="none" stroke="#c0c4cc" stroke-width="1.300"/></svg></div><div class="cb" style="left:679px;top:90.90000000000002px"></div><div class="inp" style="left:712px;top:80px;width:288.500px"><div style="width:251px;overflow:hidden">实体名称</div></div><div class="abs" style="left:-1px;top:128.99999999999994px;width:87px;line-height:26px;text-align:center;font-size:17.500px;color:#606266">参数</div><div class="inp" style="left:87.5px;top:123px;width:286px">models</div><div class="inp" style="left:375.5px;top:123px;width:286px;padding-left:17px">DataObject<svg style="left:257px;top:12.5px" width="14" height="8" viewBox="0 0 14 8" ><path d="M1 1l6 6 6-6" fill="none" stroke="#c0c4cc" stroke-width="1.300"/></svg></div><div class="cb on" style="left:679px;top:133.59999999999997px"><svg style="left:2.5px;top:3px" width="11" height="9" viewBox="0 0 11 9" ><path d="M1 4.500l3.200 3.200L10 1.500" fill="none" stroke="#fff" stroke-width="1.500"/></svg></div><div class="inp" style="left:712px;top:123px;width:288.500px"><div style="width:251px;overflow:hidden">新增实体信息数组</div></div></div>
<div class="abs" style="left:134.8px;top:446.3px;width:293.800px;height:138.200px;border:4px solid #f9281b;border-radius:5px"></div>
<div class="btn" style="left:918px;top:591px;width:69px;border:1px solid #dcdfe6;color:#606266;background:#fff">关闭</div>
<div class="btn" style="left:1005px;top:591px;width:70px;border:1px solid #409eff;color:#fff;background:#409eff;font-weight:bold">确定</div>
</div>
</body>
</html>
